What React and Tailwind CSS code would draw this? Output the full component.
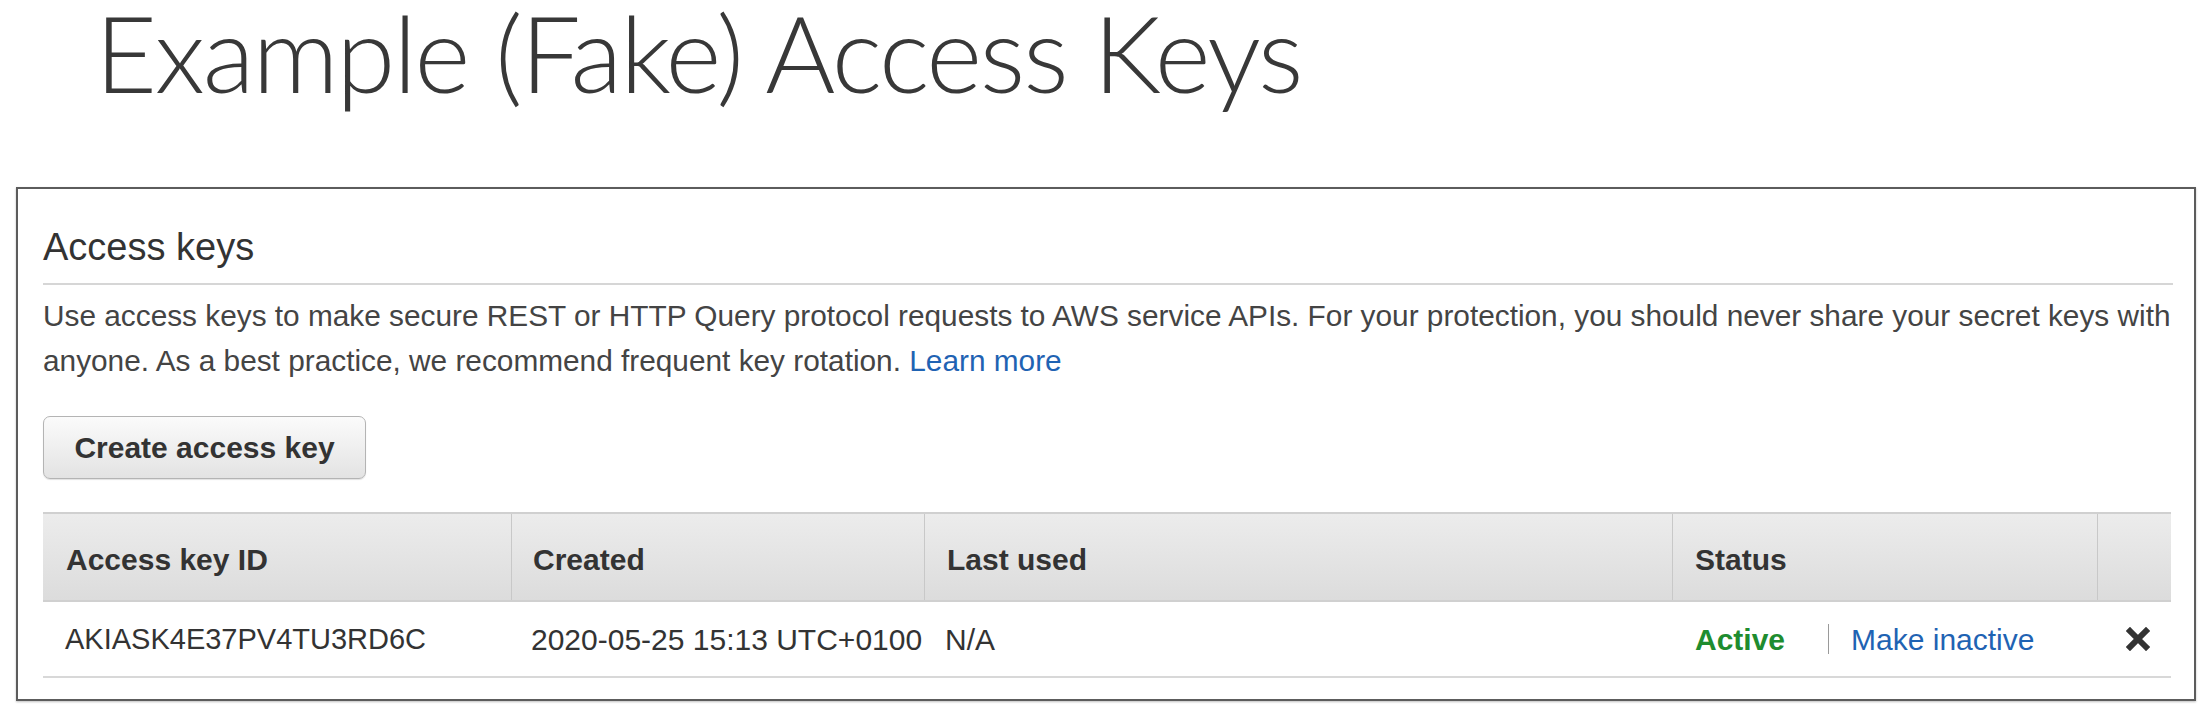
export default function App() {
  const sans = { fontFamily: '"Liberation Sans", Arial, Helvetica, sans-serif' };
  return (
    <div className="w-[2208px] h-[715px] bg-white overflow-hidden" style={sans}>
      <h1
        className="pl-[95px] text-[107px] leading-[104px] font-light tracking-[-2.2px] text-[#383838] whitespace-nowrap"
        style={{ fontFamily: 'Lato, "Open Sans", sans-serif' }}
      >
        Example (Fake) Access Keys
      </h1>

      <div className="mt-[83px] ml-[16px] w-[2180px] border-2 border-[#5c5c5c] pl-[25px] pr-[21px] pt-[36px] pb-[21px] shadow-[0_1px_2px_rgba(0,0,0,0.25)]">
        <h2 className="text-[38px] leading-[44px] text-[#333333]">Access keys</h2>
        <div className="mt-[14px] h-[2px] bg-[#d6d6d6]" />
        <p className="mt-[8px] text-[29.8px] leading-[45px] text-[#444444] whitespace-nowrap">
          Use access keys to make secure REST or HTTP Query protocol requests to AWS service APIs. For your protection, you should never share your secret keys with
          <br />
          anyone. As a best practice, we recommend frequent key rotation.{' '}
          <span className="text-[#1f63b3]">Learn more</span>
        </p>

        <button className="mt-[33px] flex h-[63px] w-[323px] items-center justify-center rounded-[7px] border border-[#b4b4b4] bg-gradient-to-b from-[#fbfbfb] to-[#e3e3e3] text-[30px] leading-[33px] font-bold text-[#333333] shadow-[0_1px_1px_rgba(0,0,0,0.12)]">
          Create access key
        </button>

        <div className="mt-[33px] w-[2128px]">
          <div className="flex h-[90px] border-t-2 border-b-2 border-[#d0d0d0] bg-gradient-to-b from-[#ececec] to-[#dcdcdc] text-[30px] leading-[33px] font-bold text-[#333333]">
            <div className="flex w-[468px] items-center pl-[23px] pt-[4px]">Access key ID</div>
            <div className="flex w-[413px] items-center border-l border-[#c8c8c8] pl-[21px] pt-[4px]">Created</div>
            <div className="flex w-[748px] items-center border-l border-[#c8c8c8] pl-[22px] pt-[4px]">Last used</div>
            <div className="flex w-[425px] items-center border-l border-[#c8c8c8] pl-[22px] pt-[4px]">Status</div>
            <div className="flex-1 border-l border-[#c8c8c8]" />
          </div>
          <div className="flex h-[76px] border-b-2 border-[#d8d8d8] text-[30px] leading-[33px] text-[#333333]">
            <div className="flex w-[468px] items-center pl-[22px] text-[29px]">AKIASK4E37PV4TU3RD6C</div>
            <div className="flex w-[413px] items-center pl-[20px] whitespace-nowrap">2020-05-25 15:13 UTC+0100</div>
            <div className="flex w-[748px] items-center pl-[21px]">N/A</div>
            <div className="flex w-[425px] items-center pl-[23px] whitespace-nowrap">
              <span className="font-bold text-[#1e8c2f]">Active</span>
              <span className="ml-[43px] h-[30px] w-[1px] bg-[#9a9a9a]" />
              <span className="ml-[22px] text-[#1f63b3]">Make inactive</span>
            </div>
            <div className="flex flex-1 items-center justify-center pl-[8px]">
              <svg width="24" height="24" viewBox="0 0 24 24" aria-hidden="true">
                <path d="M4 4 L20 20 M20 4 L4 20" stroke="#333333" strokeWidth="6" strokeLinecap="square" fill="none" />
              </svg>
            </div>
          </div>
        </div>
      </div>
    </div>
  );
}
